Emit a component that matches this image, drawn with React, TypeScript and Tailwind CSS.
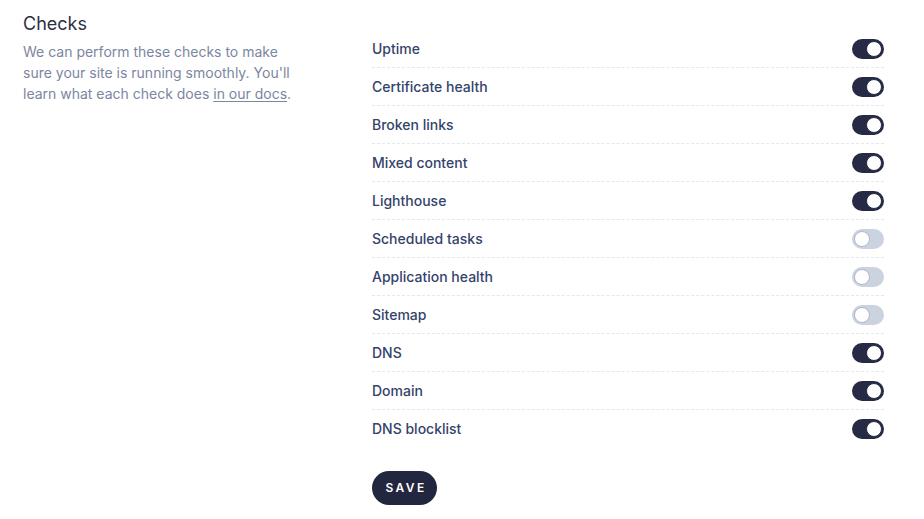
import React, { useState } from "react";

const initial: [string, boolean][] = [
  ["Uptime", true],
  ["Certificate health", true],
  ["Broken links", true],
  ["Mixed content", true],
  ["Lighthouse", true],
  ["Scheduled tasks", false],
  ["Application health", false],
  ["Sitemap", false],
  ["DNS", true],
  ["Domain", true],
  ["DNS blocklist", true],
];

function Toggle({ on, onClick }: { on: boolean; onClick: () => void }) {
  return (
    <button
      onClick={onClick}
      className={`relative flex h-[20px] w-[32px] items-center rounded-full ${on ? "bg-[#262a45] justify-end" : "bg-[#cbd3e1] justify-start"} px-[2px]`}
    >
      <span className={`block h-[16px] w-[16px] rounded-full bg-white border ${on ? "border-[#262a45]" : "border-[#aeb8ca]"}`} />
    </button>
  );
}

export default function App() {
  const [items, setItems] = useState(initial);
  return (
    <div className="flex bg-white min-h-[519px] pl-[23px] pt-[10px]" style={{ fontFamily: "Inter, 'Noto Sans', sans-serif" }}>
      <div className="w-[349px] shrink-0">
        <h2 className="text-[18px] leading-[28px] text-[#2b3040]">Checks</h2>
        <p className="mt-[3px] w-[280px] text-[14px] leading-[21px] text-[#7c869f]">
          We can perform these checks to make sure your site is running smoothly. You'll learn what each check does{" "}
          <a className="underline underline-offset-2">in our docs</a>.
        </p>
      </div>
      <div className="w-[512px] pt-[20px]">
        <div>
          {items.map(([label, on], i) => (
            <div
              key={label}
              className="flex h-[38px] items-center justify-between border-b border-dashed border-[#e3e7ee] last:border-transparent"
            >
              <span className="text-[14px] font-medium text-[#34436b]">{label}</span>
              <Toggle
                on={on}
                onClick={() =>
                  setItems(items.map((it, j) => (j === i ? [it[0], !it[1]] : it)))
                }
              />
            </div>
          ))}
        </div>
        <button className="mt-[23px] h-[34px] w-[65px] rounded-full bg-[#23263f] text-[12px] font-semibold tracking-[0.2em] pl-[3px] text-white">
          SAVE
        </button>
      </div>
    </div>
  );
}
